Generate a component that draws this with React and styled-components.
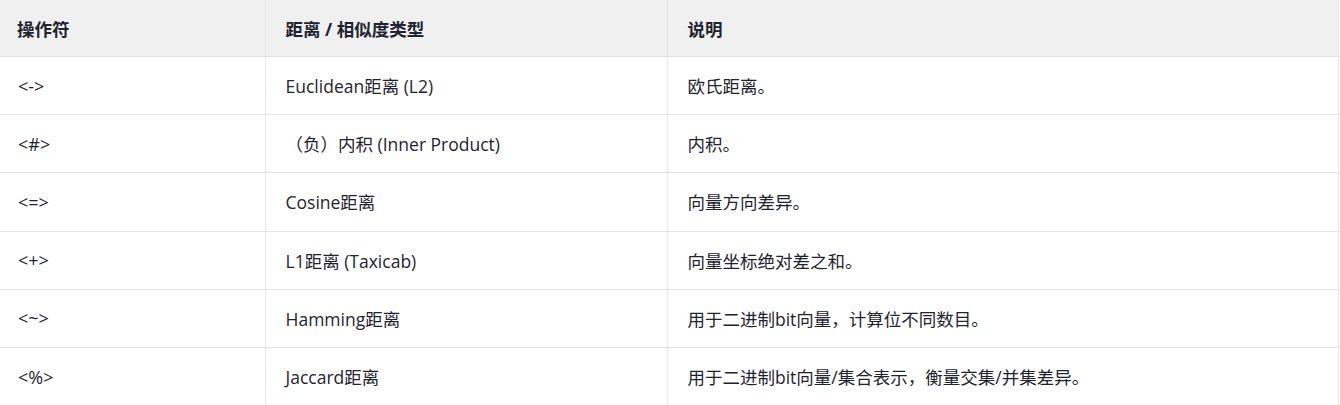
import React from "react";
import styled, { createGlobalStyle } from "styled-components";

const GlobalStyle = createGlobalStyle`
  body {
    margin: 0;
    background: #ffffff;
    font-family: "Open Sans", "Noto Sans CJK SC", sans-serif;
  }
`;

const Table = styled.table`
  width: 1339px;
  border-collapse: collapse;
  table-layout: fixed;
  color: #1f2430;
  font-size: 17.5px;
`;

const HeadCell = styled.th`
  height: 56px;
  padding: 0 20px;
  padding-left: ${(p) => (p.first ? "17px" : "20px")};
  text-align: left;
  font-weight: 700;
  background: #f0f0f0;
  border-bottom: 1px solid #dfe1e6;
  border-left: ${(p) => (p.first ? "none" : "1px solid #e8e8e8")};
  border-right: ${(p) => (p.last ? "1px solid #e8e8e8" : "none")};
`;

const Cell = styled.td`
  height: 57.2px;
  padding: 0 20px;
  border-bottom: 1px solid #e4e4e4;
  border-left: ${(p) => (p.first ? "none" : "1px solid #e8e8e8")};
  border-right: ${(p) => (p.last ? "1px solid #e8e8e8" : "none")};
  white-space: nowrap;
`;

const OpCell = styled(Cell)`
  padding-left: 18px;
  font-size: 18px;
`;

const rows = [
  ["<->", "Euclidean距离 (L2)", "欧氏距离。"],
  ["<#>", "（负）内积 (Inner Product)", "内积。"],
  ["<=>", "Cosine距离", "向量方向差异。"],
  ["<+>", "L1距离 (Taxicab)", "向量坐标绝对差之和。"],
  ["<~>", "Hamming距离", "用于二进制bit向量，计算位不同数目。"],
  ["<%>", "Jaccard距离", "用于二进制bit向量/集合表示，衡量交集/并集差异。"],
];

export default function App() {
  return (
    <>
      <GlobalStyle />
      <Table>
        <colgroup>
          <col style={{ width: 265 }} />
          <col style={{ width: 402 }} />
          <col />
        </colgroup>
        <thead>
          <tr>
            <HeadCell first>操作符</HeadCell>
            <HeadCell>距离 / 相似度类型</HeadCell>
            <HeadCell last>说明</HeadCell>
          </tr>
        </thead>
        <tbody>
          {rows.map(([op, kind, note]) => (
            <tr key={op}>
              <OpCell first>{op}</OpCell>
              <Cell>{kind}</Cell>
              <Cell last>{note}</Cell>
            </tr>
          ))}
        </tbody>
      </Table>
    </>
  );
}
